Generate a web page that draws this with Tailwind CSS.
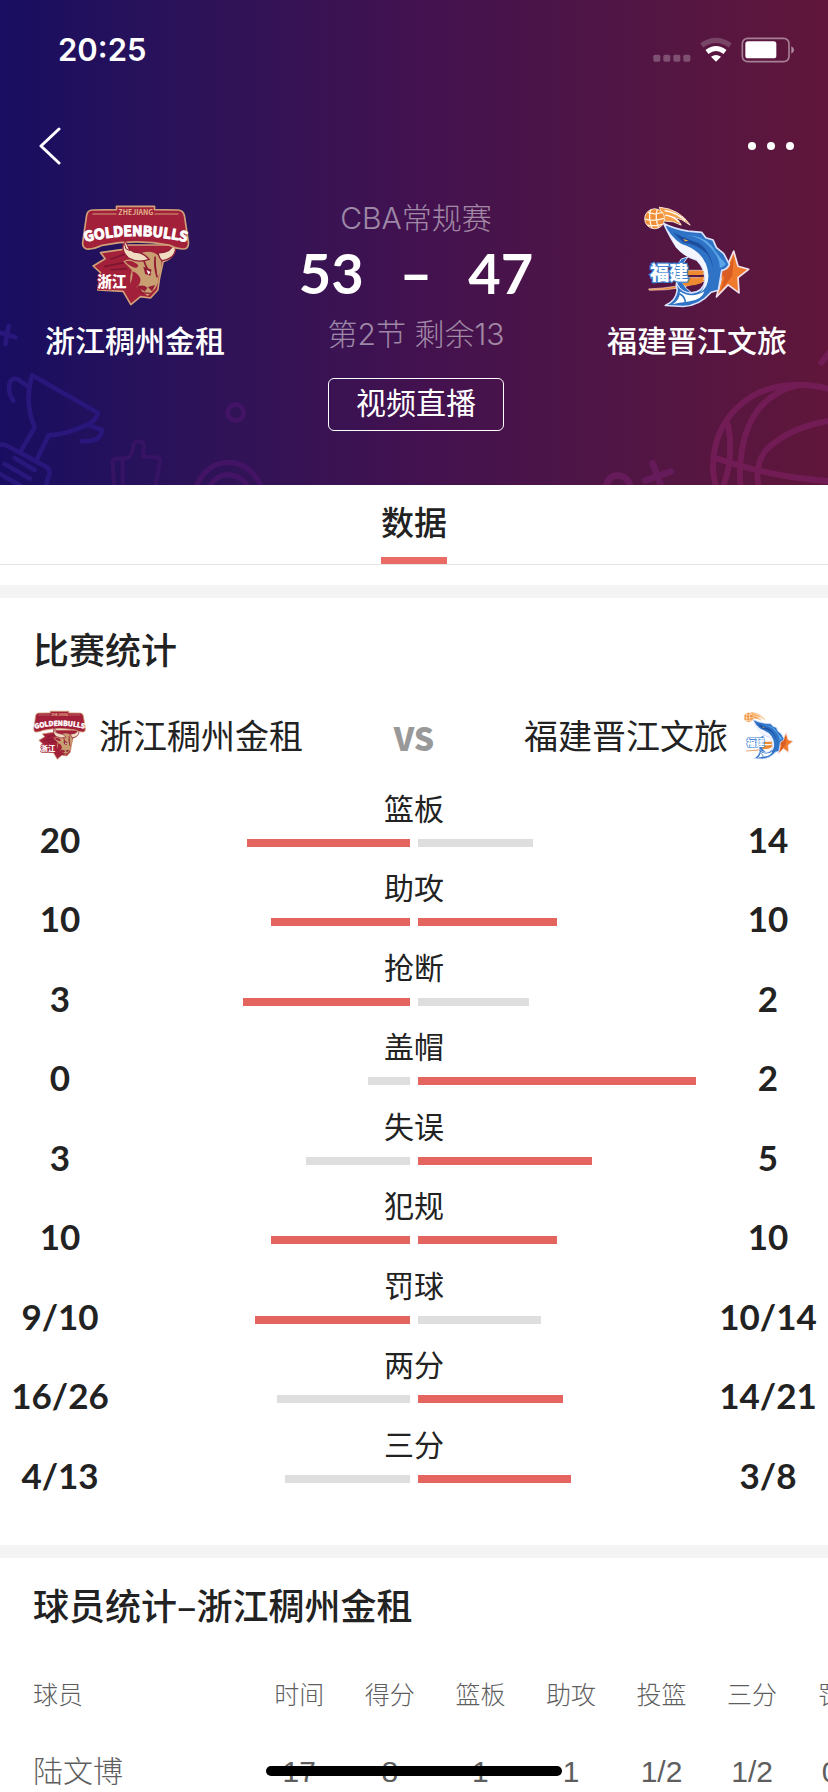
<!DOCTYPE html>
<html lang="zh-CN">
<head>
<meta charset="utf-8">
<meta name="viewport" content="width=device-width, initial-scale=1">
<title>浙江稠州金租 53 - 47 福建晋江文旅</title>
<script src="https://cdn.jsdelivr.net/npm/@tailwindcss/browser@4"></script>
</head>
<body class="min-h-screen overflow-x-hidden bg-white font-['Liberation_Sans','Noto_Sans_CJK_SC',sans-serif] text-[#222]">

<!-- Team crests, shared by the header and the comparison row -->
<svg class="hidden" aria-hidden="true">
  <symbol id="crest-zj" viewBox="62 42 326 306">
    <path d="M196 165 L188 178 L120 188 L134 206 L98 228 L120 248 L112 300 L188 304 L211 344 L240 320 L270 324 L292 300 L297 265 L308 215 Q345 205 343 165Z" fill="#a3203a" stroke="#d0a078" stroke-width="5" stroke-linejoin="round"/>
    <path d="M150 208 L205 188 M130 230 L190 218 M150 240 L200 236" stroke="#7d1530" stroke-width="5" fill="none"/>
    <path d="M225 196 Q270 172 298 200 Q310 225 294 262 Q294 290 276 304 L262 318 L246 306 L236 286 Q226 296 214 306 Q204 270 214 240 L188 214 Q210 202 226 212Z" fill="#c99e70"/>
    <path d="M194 214 Q212 208 226 220 Q240 228 226 234 Q206 230 194 214Z" fill="#a3203a"/>
    <path d="M216 244 Q234 250 240 268 Q240 282 230 290 L214 318 L202 296 Q218 270 216 244Z" fill="#a3203a"/>
    <path d="M250 212 Q256 232 266 244 M252 234 L270 240 L268 254 L256 250Z M284 200 Q280 230 290 262" fill="#8f1c34" stroke="#8f1c34" stroke-width="5"/>
    <path d="M258 240 L270 246 L264 254Z" fill="#fff"/>
    <path d="M236 290 Q250 286 258 294 L252 302Z M266 292 L280 288 L274 300Z M240 308 L270 310" fill="#a3203a" stroke="#8f1c34" stroke-width="4"/>
    <path d="M194 148 Q176 178 204 204 Q232 220 266 208 Q248 186 220 186 Q194 176 194 148Z" fill="#f0dcc0" stroke="#8f1c34" stroke-width="4"/>
    <path d="M338 164 Q330 190 292 188 Q296 204 304 212 Q344 206 345 176Z" fill="#f0dcc0" stroke="#8f1c34" stroke-width="4"/>
    <path d="M78 78 Q80 60 96 60 L168 59 V49 H282 V59 L354 60 Q369 62 372 78 L384 158 Q385 178 366 177 Q345 176 325 165 Q225 146 125 166 Q98 179 78 177 Q64 172 67 155Z" fill="#a3203a" stroke="#d0a078" stroke-width="5" stroke-linejoin="round"/>
    <path d="M96 72 H168 M282 72 H354" stroke="#d0a078" stroke-width="3"/>
    <text x="226" y="76" text-anchor="middle" font-family="Noto Sans CJK SC" font-size="21" font-weight="700" fill="#e2b48c">ZHEJIANG</text>
    <path id="zj-arc" d="M60 160 Q225 116 392 160" fill="none"/>
    <text font-family="Noto Sans CJK SC" font-size="42" font-weight="700" fill="#fff" stroke="#fff" stroke-width="3" text-anchor="middle"><textPath href="#zj-arc" startOffset="50%">GOLDENBULLS</textPath></text>
    <path d="M194 150 Q190 164 196 176 L208 182 Q200 166 194 150Z" fill="#f0dcc0" stroke="#8f1c34" stroke-width="3"/>
    <text x="110" y="292" font-family="Noto Sans CJK SC" font-size="44" font-weight="900" fill="#fff" stroke="#a3203a" stroke-width="6" paint-order="stroke">浙江</text>
  </symbol>
  <symbol id="crest-fj" viewBox="66 38 328 318">
    <path d="M86 296 Q180 294 262 262 Q200 302 88 300Z M206 240 H330 L326 252 H214Z M200 262 H310 L300 274 H196Z" fill="#f08a30" stroke="#f4d4d0" stroke-width="2"/>
    <path d="M342 182 L355 228 L387 237 L355 262 L358 308 L325 284 L290 320 L304 266 L282 232 L322 228Z" fill="#ef7a2b" stroke="#f3e3ee" stroke-width="5" stroke-linejoin="round"/>
    <path d="M342 196 L338 256 L302 304 L314 262 L296 238 L326 236Z" fill="#d95c22"/>
    <path d="M118 50 Q180 56 211 104 Q186 84 160 80 Q180 90 184 104 Q160 90 134 92Z" fill="#f6a04a" stroke="#fbe3cf" stroke-width="3"/>
    <path d="M134 60 Q170 66 196 90 M136 74 Q160 76 176 94" fill="none" stroke="#fff" stroke-width="4"/>
    <circle cx="104" cy="85" r="30" fill="#f08f38" stroke="#fbe3cf" stroke-width="3"/>
    <path d="M84 66 Q104 74 128 66 M76 86 Q100 94 132 84 M82 104 Q104 108 126 102 M92 58 Q84 84 96 112 M112 56 Q104 84 116 112" fill="none" stroke="#fff3e0" stroke-width="4"/>
    <!-- Marlin: one continuous body curling from the bill down to the tail -->
    <path d="M131 99 Q165 116 205 122 L246 126 L258 142 L280 149 L290 172 L312 190 L329 222 Q322 238 306 240 L296 300 L274 306 Q240 346 190 349 L136 346 Q168 332 172 300 Q168 286 170 278 Q184 306 214 308 Q250 306 256 272 Q258 236 232 210 Q196 200 170 170 Q150 140 131 99Z" fill="#2f73c6" stroke="#dbe4ff" stroke-width="5" stroke-linejoin="round"/>
    <path d="M184 206 Q160 240 172 282 Q186 308 216 308 Q178 284 184 240 Q188 216 204 200Z" fill="#2f73c6" stroke="#dbe4ff" stroke-width="3"/>
    <path d="M140 114 Q170 160 200 166 Q262 192 266 256 Q266 294 240 308 Q258 290 256 262 Q254 230 230 208 Q196 200 170 172Z" fill="#f4f6ff"/>
    <path d="M160 126 Q210 150 236 158 Q278 186 282 250 Q280 220 262 190 Q230 160 190 156Z" fill="#1d4fa0"/>
    <path d="M200 134 Q244 140 270 170 Q300 200 300 232 Q316 228 318 220 Q290 190 276 166 Q250 136 200 134Z" fill="#5aa5e8"/>
    <path d="M190 146 L206 150 L196 153Z" fill="#ffb03a"/>
    <path d="M202 242 H252 L248 254 H204Z M190 268 Q226 270 252 258 L246 278 Q216 290 190 284Z" fill="#f08a30"/>
    <path d="M180 304 Q214 326 254 304 Q246 330 206 334 Q176 338 158 342 Q180 330 180 304Z" fill="#fff"/>
    <path d="M178 310 Q198 320 196 340" fill="none" stroke="#2f73c6" stroke-width="5"/>
    <text x="90" y="269" font-family="Noto Sans CJK SC" font-size="58" font-weight="900" fill="#fff" stroke="#3f83d0" stroke-width="7" paint-order="stroke">福建</text>
  </symbol>
</svg>

<header class="relative overflow-hidden bg-linear-to-r from-[#180d61] via-[#42114f] to-[#60163a] pb-[54px] text-white">
  <!-- Line-art decorations along the bottom edge -->
  <svg class="absolute bottom-0 left-0 h-[185px] w-[276px]" viewBox="0 0 828 555" fill="none" stroke-linecap="round" stroke-linejoin="round" aria-hidden="true">
    <g stroke="#29177b" stroke-width="14">
      <path d="M26 78 L16 132 M-6 96 L46 112"/>
      <path d="M96 226 L294 338 Q290 360 262 374 Q200 404 146 406 L108 484 M96 226 Q72 310 104 382 L60 458 M88 262 L54 238 Q28 232 28 256 Q24 280 40 302 M262 374 L306 390 Q306 412 278 422 L246 424 M-6 436 Q12 430 26 440 L134 498 Q152 506 148 522 L138 555 M44 474 L104 510 M14 492 L90 536 M-4 520 L60 556"/>
    </g>
    <g stroke="#371365" stroke-width="12">
      <path d="M342 552 L338 488 Q338 476 350 476 L384 474 Q400 460 400 436 Q402 424 416 424 Q432 424 432 440 L428 470 L470 472 Q482 474 480 486 L468 552 M368 480 V552"/>
    </g>
    <g stroke="#431466" stroke-width="14">
      <circle cx="707" cy="338" r="24"/>
      <path d="M588 560 Q620 488 685 487 Q750 488 784 560 M628 560 Q650 524 685 524 Q722 526 744 560" stroke-width="16"/>
    </g>
  </svg>
  <svg class="absolute right-0 bottom-0 h-[145px] w-[231px]" viewBox="549 120 693 435" fill="none" stroke-linecap="round" stroke-linejoin="round" aria-hidden="true">
    <g stroke="#651a5a" stroke-width="20">
      <path d="M576 560 Q584 526 612 526 Q640 528 650 560"/>
      <path d="M716 490 L742 560 M694 542 L770 514"/>
    </g>
    <g stroke="#711c54" stroke-width="18">
      <path d="M1222 188 L1250 152"/>
      <path d="M906 560 Q888 500 906 430 Q934 330 1030 280 Q1130 236 1250 268 M1150 256 Q1010 290 984 450 Q974 510 980 560 M1250 362 Q1130 380 1060 446 Q1020 490 1034 560 M900 472 Q1060 530 1250 544 M942 374 Q960 470 930 552"/>
    </g>
  </svg>

  <div class="relative flex h-[100px] items-center justify-between pr-[34px] pl-[58px]">
    <time class="font-['Inter'] text-[31px] leading-10 font-semibold">20:25</time>
    <svg class="h-[26px] w-[142px]" viewBox="713 110 426 78" fill="none" role="img" aria-label="Wi-Fi 与电量">
      <g fill="#fff" fill-opacity=".25">
        <rect x="717" y="163" width="21" height="21" rx="5"/><rect x="747" y="163" width="21" height="21" rx="5"/><rect x="777" y="163" width="21" height="21" rx="5"/><rect x="807" y="163" width="21" height="21" rx="5"/>
      </g>
      <path d="M862 135 Q905 105 948 135" stroke="#fff" stroke-opacity=".2" stroke-width="15"/>
      <path d="M878 155 Q905 134 932 155" stroke="#fff" stroke-width="15"/>
      <path d="M890 169 Q905 159 920 169 L905 184Z" fill="#fff"/>
      <rect x="984" y="114" width="140" height="70" rx="16" stroke="#fff" stroke-opacity=".45" stroke-width="5"/>
      <rect x="993" y="123" width="93" height="51" rx="8" fill="#fff"/>
      <path d="M1131 138 Q1139 141 1139 149 Q1139 157 1131 160Z" fill="#fff" fill-opacity=".5"/>
    </svg>
  </div>

  <nav class="relative flex h-[92px] items-center justify-between pr-[34px] pl-[38px]">
    <button type="button" aria-label="返回">
      <svg class="h-[38px] w-6" viewBox="0 0 24 38" fill="none" stroke="#fff" stroke-width="3" stroke-linecap="round" stroke-linejoin="round"><path d="M21 2 L3 19 L21 36"/></svg>
    </button>
    <button type="button" aria-label="更多">
      <svg class="h-6 w-[48px]" viewBox="0 0 48 24" fill="#fff"><circle cx="6" cy="12" r="4"/><circle cx="25" cy="12" r="4"/><circle cx="44" cy="12" r="4"/></svg>
    </button>
  </nav>

  <div class="relative flex justify-between pr-[41px] pl-[45px]">
    <div class="flex flex-col items-center pt-3">
      <svg class="h-[102px] w-[109px]" role="img" aria-label="浙江稠州金租队徽"><use href="#crest-zj"/></svg>
      <h2 class="mt-[18px] text-[30px] leading-9 font-medium">浙江稠州金租</h2>
    </div>
    <div class="flex flex-col items-center pt-2 font-['Inter','Noto_Sans_CJK_SC',sans-serif]">
      <p class="text-[30px] leading-9 font-light text-white/50">CBA常规赛</p>
      <p class="mt-[9px] flex items-center justify-center gap-9 font-['Lato'] text-[56px] leading-[56px] font-bold"><span>53</span><span class="font-black">–</span><span>47</span></p>
      <p class="mt-[15px] text-[30px] leading-9 font-light text-white/50">第2节 剩余13</p>
      <button type="button" class="mt-[26px] h-[53px] w-44 rounded-md border border-white pb-1 text-[30px] leading-9">视频直播</button>
    </div>
    <div class="flex flex-col items-center pt-[11px]">
      <svg class="h-[106px] w-[109px]" role="img" aria-label="福建晋江文旅队徽"><use href="#crest-fj"/></svg>
      <h2 class="mt-[15px] text-[30px] leading-9 font-medium">福建晋江文旅</h2>
    </div>
  </div>
</header>

<main>
  <div class="flex h-[80px] justify-center border-b border-[#e5e5e5]">
    <button type="button" class="border-b-[7px] border-[#ea6a66] pt-[6px] text-[33px] leading-10 font-medium">数据</button>
  </div>
  <div class="mt-5 h-[13px] bg-[#f4f4f4]"></div>

  <section class="pt-[30px] pb-10">
    <h2 class="px-[33px] text-[36px] leading-[48px] font-medium">比赛统计</h2>
    <div class="mt-[34px] grid h-[54px] grid-cols-[1fr_auto_1fr] items-center px-[33px] text-[34px] leading-10">
      <div class="flex items-center gap-[13px]">
        <svg class="mb-1 h-[50px] w-[53px]" aria-hidden="true"><use href="#crest-zj"/></svg>
        <span>浙江稠州金租</span>
      </div>
      <span class="font-['Noto_Sans_CJK_SC'] text-[32px] leading-10 font-black text-[#999]">VS</span>
      <div class="flex items-center justify-end gap-[14px]">
        <span>福建晋江文旅</span>
        <svg class="mb-1 h-[50px] w-[53px]" aria-hidden="true"><use href="#crest-fj"/></svg>
      </div>
    </div>
    <ul id="stats" class="mt-[26px]"></ul>
  </section>

  <div class="h-[13px] bg-[#f4f4f4]"></div>

  <section class="pt-[22px]">
    <h2 class="px-[33px] font-['Noto_Sans_CJK_SC',sans-serif] text-[36px] leading-[48px] font-medium">球员统计–浙江稠州金租</h2>
    <div class="mt-7 overflow-hidden">
      <table class="w-[888px] table-fixed text-center text-[#5e5e5e]">
        <thead>
          <tr class="h-[78px] text-[25px] leading-8">
            <th scope="col" class="w-[254px] pl-[33px] text-left font-light">球员</th>
            <th scope="col" class="font-light">时间</th>
            <th scope="col" class="font-light">得分</th>
            <th scope="col" class="font-light">篮板</th>
            <th scope="col" class="font-light">助攻</th>
            <th scope="col" class="font-light">投篮</th>
            <th scope="col" class="font-light">三分</th>
            <th scope="col" class="font-light">罚球</th>
          </tr>
        </thead>
        <tbody>
          <tr class="h-[58px] text-[30px] leading-9">
            <th scope="row" class="pt-[18px] pl-[33px] text-left font-light">陆文博</th>
            <td class="pt-[18px]">17</td>
            <td class="pt-[18px]">8</td>
            <td class="pt-[18px]">1</td>
            <td class="pt-[18px]">1</td>
            <td class="pt-[18px]">1/2</td>
            <td class="pt-[18px]">1/2</td>
            <td class="pt-[18px]">0/0</td>
          </tr>
        </tbody>
      </table>
    </div>
  </section>
</main>

<div class="fixed bottom-4 left-1/2 h-[10px] w-[296px] -translate-x-1/2 rounded-full bg-black"></div>

<script>
  // label, home value, away value, home bar width, away bar width, leaders
  const stats = [
    ['篮板', '20', '14', 163, 115, 'h'],
    ['助攻', '10', '10', 139, 139, 'ha'],
    ['抢断', '3', '2', 167, 111, 'h'],
    ['盖帽', '0', '2', 42, 278, 'a'],
    ['失误', '3', '5', 104, 174, 'a'],
    ['犯规', '10', '10', 139, 139, 'ha'],
    ['罚球', '9/10', '10/14', 155, 123, 'h'],
    ['两分', '16/26', '14/21', 133, 145, 'a'],
    ['三分', '4/13', '3/8', 125, 153, 'a']
  ];
  const bar = (width, lead) =>
    `<div class="h-2 ${lead ? 'bg-[#e4645f]' : 'bg-[#dedede]'}" style="width:${width}px"></div>`;
  document.getElementById('stats').innerHTML = stats.map(([label, home, away, hw, aw, lead]) => `
    <li class="grid grid-cols-[120px_1fr_120px] odd:h-[79px] even:h-20">
      <span class="pt-[30px] text-center font-['Lato'] text-[35px] leading-[38px] font-bold">${home}</span>
      <div>
        <p class="pt-[1px] text-center text-[30px] leading-[38px]">${label}</p>
        <div class="mt-[10px] grid grid-cols-2 gap-2">
          <div class="flex justify-end">${bar(hw, lead.includes('h'))}</div>
          <div class="flex">${bar(aw, lead.includes('a'))}</div>
        </div>
      </div>
      <span class="pt-[30px] text-center font-['Lato'] text-[35px] leading-[38px] font-bold">${away}</span>
    </li>`).join('');
</script>
</body>
</html>
